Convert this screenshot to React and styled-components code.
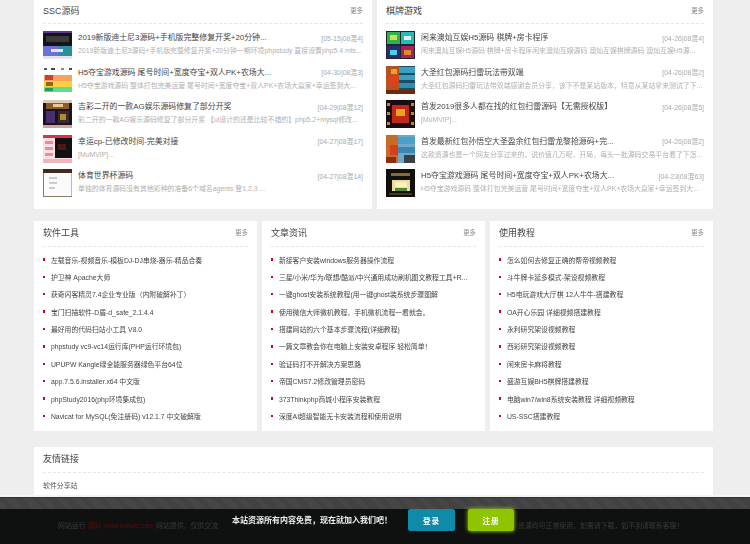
import React from 'react';
import styled, { createGlobalStyle } from 'styled-components';

const FONT = '"Liberation Sans", "Noto Sans CJK SC", sans-serif';

const Global = createGlobalStyle`
  html, body {
    margin: 0;
    height: 544px;
    overflow: hidden;
    background: #eeeeef;
    font-family: ${FONT};
  }
`;

const s = {
  Page: styled.div`
    width: 679px;
    margin-left: 34px;
    display: flex;
    flex-direction: column;
    filter: blur(0.55px);
  `,
  TopRow: styled.div`
    display: grid;
    grid-template-columns: 338px 336px;
    column-gap: 5px;
  `,
  MidRow: styled.div`
    display: grid;
    grid-template-columns: repeat(3, 223px);
    column-gap: 5px;
    margin-top: 12px;
  `,
  Panel: styled.section`
    background: #fff;
    height: ${(p) => p.$height}px;
    padding: 0 9px;
    box-sizing: border-box;
  `,
  LinkPanel: styled.section`
    background: #fff;
    height: 48px;
    padding: 0 9px;
    margin-top: 16px;
  `,
  Head: styled.div`
    height: ${(p) => p.$height}px;
    padding-bottom: 2px;
    box-sizing: border-box;
    display: flex;
    align-items: center;
    justify-content: space-between;
    border-bottom: 1px dashed #e6e6e6;
  `,
  Title: styled.h3`
    margin: 0;
    font-size: 9px;
    font-weight: normal;
    color: #444;
  `,
  More: styled.span`
    font-size: 6.4px;
    color: #888;
  `,
  Rows: styled.div`
    padding-top: 7px;
    display: flex;
    flex-direction: column;
    gap: 6.6px;
  `,
  Row: styled.div`
    height: 28px;
    display: flex;
    gap: 6px;
  `,
  Thumb: styled.svg`
    width: 29px;
    height: 28px;
    flex: none;
    display: block;
  `,
  RowBody: styled.div`
    flex: 1;
    min-width: 0;
    display: flex;
    flex-direction: column;
    gap: 4px;
    padding-top: 2px;
  `,
  RowTop: styled.div`
    display: flex;
    justify-content: space-between;
    align-items: center;
    height: 9px;
  `,
  RowTitle: styled.div`
    font-size: 7.9px;
    line-height: 9px;
    color: #444;
    white-space: nowrap;
  `,
  Date: styled.span`
    font-size: 6.9px;
    color: #aaa;
    white-space: nowrap;
  `,
  Summary: styled.div`
    font-size: 6.9px;
    line-height: 9px;
    color: #b0b0b0;
    white-space: nowrap;
    overflow: hidden;
  `,
  List: styled.ul`
    list-style: none;
    margin: 0;
    padding: 8px 0 0;
    display: flex;
    flex-direction: column;
    gap: 8.4px;
  `,
  Item: styled.li`
    height: 9px;
    display: flex;
    align-items: center;
    gap: 5.5px;
    font-size: 6.85px;
    color: #444;
    white-space: nowrap;
    &::before {
      content: '';
      width: 2.4px;
      height: 2.4px;
      background: #d0021b;
      flex: none;
    }
  `,
  LinkText: styled.div`
    padding-top: 7px;
    font-size: 6.9px;
    color: #555;
  `,
  Bar: styled.div`
    position: fixed;
    left: 0;
    right: 0;
    bottom: 0;
    height: 49px;
    box-sizing: border-box;
    border-top: 2px solid #f4f4f4;
    background: #0f1010;
    font-family: ${FONT};
    filter: blur(0.4px);
  `,
  BarStrip: styled.div`
    height: 12px;
    border-top: 1px solid #333;
    box-sizing: border-box;
    background: repeating-linear-gradient(45deg, #4a4a4a 0 1px, #3e3e3e 1px 2px);
  `,
  BarBody: styled.div`
    height: 35px;
    display: flex;
    align-items: flex-start;
    padding-left: 58px;
  `,
  FaintText: styled.div`
    width: ${(p) => p.$width}px;
    margin-top: 12px;
    margin-left: ${(p) => p.$left || 0}px;
    font-size: 6.9px;
    line-height: 9px;
    color: #3b3b3b;
    white-space: nowrap;
  `,
  FaintRed: styled.span`
    color: #5f0c0c;
  `,
  Notice: styled.div`
    width: 176px;
    margin-top: 7px;
    font-size: 8px;
    line-height: 10px;
    font-weight: bold;
    color: #eee;
    white-space: nowrap;
  `,
  Btn: styled.div`
    width: ${(p) => p.$width}px;
    height: 22px;
    margin-left: ${(p) => p.$left}px;
    border-radius: 2px;
    background: ${(p) => p.$bg};
    box-shadow: ${(p) => p.$glow || 'none'};
    color: #fff;
    font-size: 7.6px;
    font-weight: bold;
    display: flex;
    align-items: center;
    justify-content: center;
    letter-spacing: 1px;
  `,
};

const Rects = ({ items }) =>
  items.map(([x, y, w, h, c], i) => <rect key={i} x={x} y={y} width={w} height={h} fill={c} />);

// 缩略图只是小色块拼出来的
const thumbs = {
  a: [[0, 0, 29, 28, '#fff'], [0, 0, 29, 15, '#15121c'], [3, 5, 23, 6, '#3a3a3a'], [0, 0, 29, 2, '#5a3f88'], [0, 15, 29, 10, '#6f6fd8'], [16, 15, 13, 10, '#2a8f9c'], [8, 18, 12, 3, '#dfe6f0'], [0, 25, 29, 3, '#e4e4e8']],
  b: [[0, 0, 29, 28, '#fff'], [1, 2, 3, 2, '#555'], [8, 2, 4, 2, '#444'], [18, 2, 3, 2, '#888'], [26, 2, 3, 2, '#444'], [1, 9, 28, 6, '#f6a45c'], [1, 15, 28, 6, '#fbcf3e'], [1, 21, 28, 5, '#62dc8c'], [2, 9, 8, 5, '#c8432c'], [3, 16, 7, 4, '#8a6a14'], [2, 22, 8, 3, '#1f9a5a']],
  c: [[0, 0, 29, 28, '#1a1420'], [0, 0, 29, 3, '#d9c9b8'], [3, 3, 23, 6, '#8c5a2e'], [10, 4, 10, 3, '#e8c88c'], [3, 11, 9, 12, '#4b2e70'], [15, 11, 11, 12, '#3a2a2a'], [17, 14, 6, 6, '#b58a2a'], [0, 25, 29, 3, '#d9a0a0']],
  d: [[0, 0, 29, 28, '#fbdfe3'], [0, 0, 29, 3, '#d9334a'], [12, 3, 17, 20, '#111'], [15, 9, 8, 6, '#4a1a1a'], [2, 6, 8, 3, '#eb8a98'], [2, 12, 8, 3, '#eb8a98'], [2, 18, 8, 3, '#eb8a98'], [0, 24, 29, 4, '#f0b4bc']],
  e: [[0, 0, 29, 28, '#fafafa'], [0, 0, 29, 4, '#3f2c1e'], [0, 4, 1, 24, '#8a7a6a'], [28, 4, 1, 24, '#bbb'], [6, 8, 8, 2, '#ccc'], [6, 13, 8, 2, '#ccc'], [6, 18, 6, 2, '#ccc'], [0, 27, 29, 1, '#8a7a6a']],
  f: [[0, 0, 29, 28, '#223'], [1, 1, 13, 12, '#2eb24e'], [15, 1, 13, 12, '#2ab8b8'], [1, 15, 13, 12, '#2a2a7a'], [15, 15, 13, 12, '#a0265a'], [4, 4, 7, 5, '#c8e05a'], [18, 5, 7, 4, '#e0f4f4'], [4, 19, 7, 5, '#4ad0e0'], [18, 19, 7, 5, '#e08a2a']],
  g: [[0, 0, 29, 28, '#1c4d66'], [0, 0, 13, 28, '#b5531c'], [13, 1, 16, 6, '#3aa0c0'], [13, 9, 16, 5, '#3aa0c0'], [13, 17, 16, 5, '#2f8fae'], [3, 10, 9, 10, '#e0401c'], [5, 3, 6, 5, '#e8a030'], [0, 24, 29, 4, '#6a2a10']],
  h: [[0, 0, 29, 28, '#1a0c10'], [6, 5, 17, 18, '#c0281c'], [10, 9, 9, 7, '#f0a020'], [1, 3, 3, 3, '#b8863a'], [25, 3, 3, 3, '#b8863a'], [1, 12, 3, 3, '#b8863a'], [25, 12, 3, 3, '#b8863a'], [1, 22, 3, 3, '#b8863a'], [25, 22, 3, 3, '#b8863a']],
  i: [[0, 0, 29, 28, '#70a8c8'], [0, 0, 12, 28, '#c86a2a'], [12, 2, 17, 7, '#4aa0c8'], [12, 12, 17, 6, '#3a88b0'], [4, 10, 8, 10, '#d8401c'], [18, 20, 11, 8, '#3a4048'], [0, 22, 10, 6, '#8a3010']],
  j: [[0, 0, 29, 28, '#12100c'], [6, 11, 18, 11, '#f0dc9a'], [9, 13, 12, 5, '#fff2c0'], [9, 19, 12, 3, '#5a8a30'], [5, 4, 19, 3, '#8a6a2a'], [3, 24, 23, 2, '#4a3a1a']],
};

const Thumb = ({ kind }) => (
  <s.Thumb viewBox="0 0 29 28" aria-hidden="true">
    <Rects items={thumbs[kind]} />
  </s.Thumb>
);

const sscRows = [
  ['a', '2019新版迪士尼3源码+手机版完整修复开奖+20分钟...', '[05-15|08混4]', '2019新版迪士尼3源码+手机版完整修复开奖+20分钟一期环境phpstudy 直接设置php5.4 mts...'],
  ['b', 'H5夺宝游戏源码 尾号时间+宽度夺宝+双人PK+农场大...', '[04-30|08混3]', 'H5夺宝游戏源码 整体打包完美运营 尾号时间+宽度夺宝+双人PK+农场大赢家+幸运签到大...'],
  ['c', '吉彩二开的一款AG娱乐源码修复了部分开奖', '[04-29|08混12]', '彩二开的一款AG娱乐源码修复了部分开奖 【ui设计的还是比较不错的】php5.2+mysql修改...'],
  ['d', '幸运cp-已修改时间-完美对接', '[04-27|08混17]', '[MuMVIP]...'],
  ['e', '体育世界杯源码', '[04-27|08混14]', '单独的体育源码没有其他彩种的准备6个域名agents      登1,2,3 ...'],
];

const gameRows = [
  ['f', '闲来澳灿互娱H5源码 棋牌+房卡程序', '[04-26|08混4]', '闲来澳灿互娱H5源码 棋牌+房卡程序闲来澳灿互娱源码 澳灿互娱棋牌源码 澳灿互娱H5源...'],
  ['g', '大圣红包源码扫雷玩法带双端', '[04-26|08混2]', '大圣红包源码扫雷玩法带双端感谢会员分享，该下不是某站版本，特意从某站拿来测试了下...'],
  ['h', '首发2019很多人都在找的红包扫雷源码【无需授权版】', '[04-26|08混5]', '[MuMVIP]...'],
  ['i', '首发最新红包孙悟空大圣盈余红包扫雷龙黎抢源码+完...', '[04-26|08混2]', '这款资源也是一个网友分享过来的，说价值几万呢，开局，每头一批源码交易平台看了下怎...'],
  ['j', 'H5夺宝游戏源码 尾号时间+宽度夺宝+双人PK+农场大...', '[04-23|08混63]', 'H5夺宝游戏源码 整体打包完美运营 尾号时间+宽度夺宝+双人PK+农场大赢家+幸运签到大...'],
];

const tools = [
  '左载音乐-视频音乐-模板DJ-DJ串烧-器乐-精品合奏',
  '护卫神 Apache大师',
  '获奇闪客精灵7.4企业专业版（内附破解补丁）',
  '宝门扫描软件-D盾-d_safe_2.1.4.4',
  '最好用的代码扫站小工具 V8.0',
  'phpstudy vc9-vc14运行库(PHP运行环境包)',
  'UPUPW Kangle绿全能服务器绿色平台64位',
  'app.7.5.6.installer.x64 中文版',
  'phpStudy2016(php环境集成包)',
  'Navicat for MySQL(免注册码) v12.1.7 中文破解版',
];

const news = [
  '新接客户安装windows服务器操作流程',
  '三星/小米/华为/联想/酷派/中兴通用成功刷机图文教程工具+R...',
  '一键ghost安装系统教程(用一键ghost装系统步骤图解',
  '使用微信大师微机教程，手机微机流程一看就会。',
  '搭建网站的六个基本步骤流程(详细教程)',
  '一篇文章教会你在电脑上安装安卓程序 轻松简单！',
  '验证码打不开解决方案思路',
  '帝国CMS7.2修改管理员密码',
  '373Thinkphp商城小程序安装教程',
  '深度AI超级智能无卡安装流程和使用说明',
];

const guides = [
  '怎么如何去修复正确的帮帝视频教程',
  '斗牛牌卡延多模式-架设视频教程',
  'H5电玩游戏大厅棋 12人牛牛-搭建教程',
  'OA开心乐园 详细视频搭建教程',
  '永利研究架设视频教程',
  '西彩研究架设视频教程',
  '闲来房卡麻将教程',
  '盛游互娱BH5棋牌搭建教程',
  '电脑win7/win8系统安装教程 详细视频教程',
  'US-SSC搭建教程',
];

const RowPanel = ({ title, rows }) => (
  <s.Panel $height={209}>
    <s.Head $height={24}>
      <s.Title>{title}</s.Title>
      <s.More>更多</s.More>
    </s.Head>
    <s.Rows>
      {rows.map(([kind, name, date, summary]) => (
        <s.Row key={name}>
          <Thumb kind={kind} />
          <s.RowBody>
            <s.RowTop>
              <s.RowTitle>{name}</s.RowTitle>
              <s.Date>{date}</s.Date>
            </s.RowTop>
            <s.Summary>{summary}</s.Summary>
          </s.RowBody>
        </s.Row>
      ))}
    </s.Rows>
  </s.Panel>
);

const ListPanel = ({ title, items }) => (
  <s.Panel $height={210}>
    <s.Head $height={26}>
      <s.Title>{title}</s.Title>
      <s.More>更多</s.More>
    </s.Head>
    <s.List>
      {items.map((text) => (
        <s.Item key={text}>{text}</s.Item>
      ))}
    </s.List>
  </s.Panel>
);

const App = () => (
  <>
    <Global />
    <s.Page>
      <s.TopRow>
        <RowPanel title="SSC源码" rows={sscRows} />
        <RowPanel title="棋牌游戏" rows={gameRows} />
      </s.TopRow>
      <s.MidRow>
        <ListPanel title="软件工具" items={tools} />
        <ListPanel title="文章资讯" items={news} />
        <ListPanel title="使用教程" items={guides} />
      </s.MidRow>
      <s.LinkPanel>
        <s.Head $height={26}>
          <s.Title>友情链接</s.Title>
        </s.Head>
        <s.LinkText>软件分享站</s.LinkText>
      </s.LinkPanel>
    </s.Page>
    <s.Bar>
      <s.BarStrip />
      <s.BarBody>
        <s.FaintText $width={174}>
          网站运行 <s.FaintRed>源码 www.wmvip.com</s.FaintRed> 网站提供，仅供交流
        </s.FaintText>
        <s.Notice>本站资源所有内容免费，现在就加入我们吧！</s.Notice>
        <s.Btn $width={47} $left={0} $bg="#0f8aa8">登录</s.Btn>
        <s.Btn $width={46} $left={13} $bg="#8fc400" $glow="0 0 4px #a4e000">注册</s.Btn>
        <s.FaintText $width={170} $left={4}>
          资源均可正常使用，如需请下载，如不到请联系客服！
        </s.FaintText>
      </s.BarBody>
    </s.Bar>
  </>
);

export default App;
